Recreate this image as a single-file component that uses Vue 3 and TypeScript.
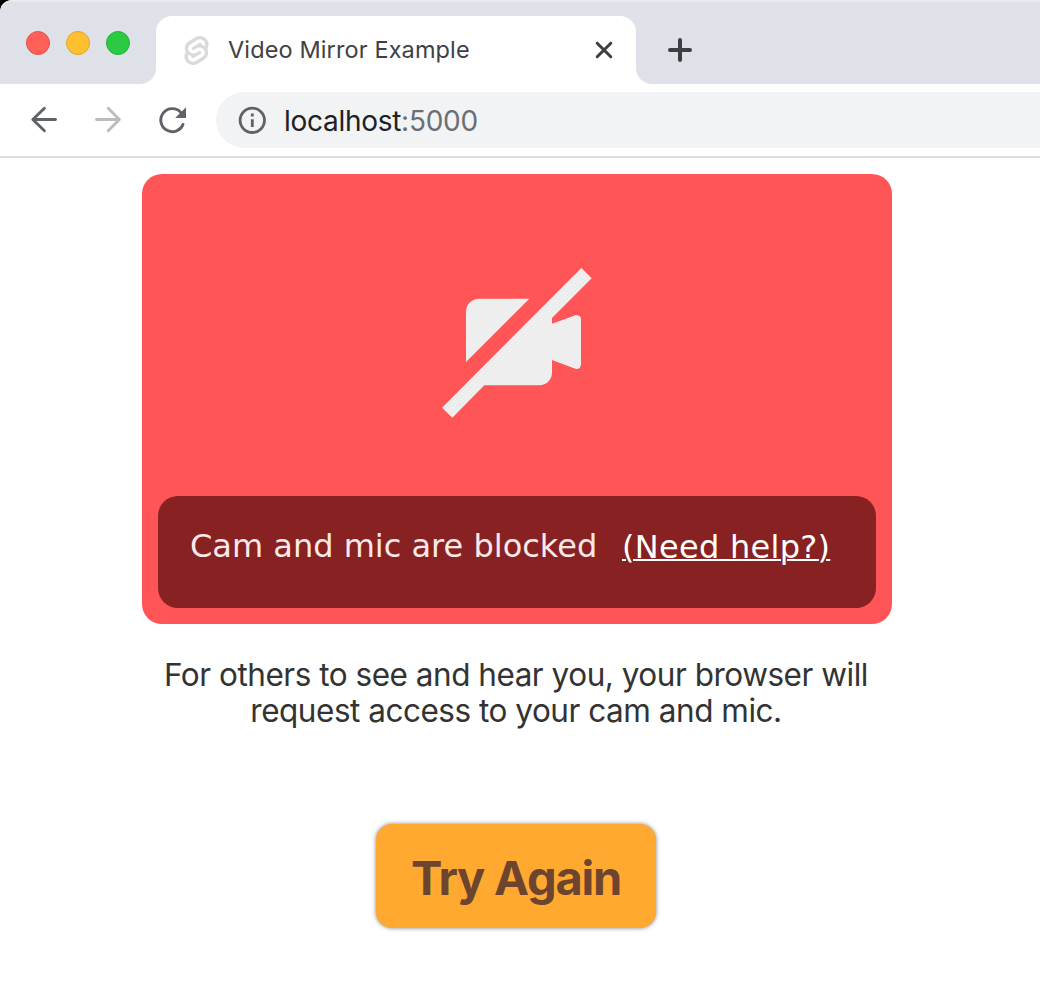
<script setup lang="ts">
const windowControls: string[] = ['close', 'minimize', 'maximize']
const tabTitle = 'Video Mirror Example'
const address = { host: 'localhost', port: ':5000' }
</script>

<template>
  <div class="window">
    <header class="tab-strip">
      <div class="controls">
        <span v-for="name in windowControls" :key="name" class="control" :class="name"></span>
      </div>
      <div class="tab">
        <svg class="favicon" viewBox="0 0 24 24" aria-hidden="true">
          <path d="M10.354 21.125a4.44 4.44 0 0 1-4.765-1.767 4.109 4.109 0 0 1-.703-3.107 3.898 3.898 0 0 1 .134-.522l.105-.321.287.21a7.21 7.21 0 0 0 2.186 1.092l.208.063-.02.208a1.253 1.253 0 0 0 .226.83 1.337 1.337 0 0 0 1.435.533 1.231 1.231 0 0 0 .343-.15l5.59-3.562a1.164 1.164 0 0 0 .524-.778 1.242 1.242 0 0 0-.211-.937 1.338 1.338 0 0 0-1.435-.533 1.23 1.23 0 0 0-.343.15l-2.133 1.36a4.078 4.078 0 0 1-1.135.499 4.44 4.44 0 0 1-4.765-1.766 4.108 4.108 0 0 1-.702-3.108 3.855 3.855 0 0 1 1.742-2.582l5.589-3.563a4.072 4.072 0 0 1 1.135-.499 4.44 4.44 0 0 1 4.765 1.767 4.109 4.109 0 0 1 .703 3.107 3.943 3.943 0 0 1-.134.522l-.105.321-.286-.21a7.204 7.204 0 0 0-2.187-1.093l-.208-.063.02-.207a1.255 1.255 0 0 0-.226-.831 1.337 1.337 0 0 0-1.435-.532 1.231 1.231 0 0 0-.343.15L8.62 9.368a1.162 1.162 0 0 0-.524.778 1.24 1.24 0 0 0 .211.937 1.338 1.338 0 0 0 1.435.533 1.235 1.235 0 0 0 .344-.151l2.132-1.36a4.067 4.067 0 0 1 1.135-.498 4.44 4.44 0 0 1 4.765 1.766 4.108 4.108 0 0 1 .702 3.108 3.857 3.857 0 0 1-1.742 2.583l-5.589 3.562a4.072 4.072 0 0 1-1.135.499m10.358-17.95C18.484-.015 14.082-.96 10.9 1.068L5.31 4.63a6.412 6.412 0 0 0-2.896 4.295 6.753 6.753 0 0 0 .666 4.336 6.43 6.43 0 0 0-.96 2.396 6.833 6.833 0 0 0 1.168 5.167c2.229 3.19 6.63 4.135 9.812 2.108l5.59-3.562a6.41 6.41 0 0 0 2.896-4.295 6.756 6.756 0 0 0-.665-4.336 6.429 6.429 0 0 0 .958-2.396 6.831 6.831 0 0 0-1.167-5.168Z" />
        </svg>
        <span class="tab-title">{{ tabTitle }}</span>
        <svg class="tab-close" viewBox="0 0 20 20" aria-hidden="true">
          <path d="M3.2 3.2 16.8 16.8M16.8 3.2 3.2 16.8" />
        </svg>
      </div>
      <svg class="new-tab" viewBox="0 0 24 24" aria-hidden="true">
        <path d="M12 2V22M2 12H22" />
      </svg>
    </header>

    <nav class="toolbar">
      <svg class="nav-icon" viewBox="0 0 32 32" aria-hidden="true">
        <path d="M27.5 15.5H5M16.4 4.3 4.8 15.5 16.4 26.7" />
      </svg>
      <svg class="nav-icon disabled" viewBox="0 0 32 32" aria-hidden="true">
        <path d="M4.5 15.5H27M16.2 4.3 27.4 15.5 16.2 26.7" />
      </svg>
      <svg class="nav-icon" viewBox="0 0 32 32" aria-hidden="true">
        <path d="M27 20.4A11.5 11.5 0 1 1 24.8 8.4" />
        <path class="solid" d="M30 3.2V14H19.2Z" />
      </svg>
      <div class="omnibox">
        <svg class="info" viewBox="0 0 28 28" aria-hidden="true">
          <circle cx="14.3" cy="14.3" r="12.2" />
          <path d="M14.3 13.2V21M14.3 7.6V10.5" />
        </svg>
        <span class="url">{{ address.host }}<span class="port">{{ address.port }}</span></span>
      </div>
    </nav>

    <main class="page">
      <section class="video-frame">
        <svg class="camera-off" viewBox="0 0 540 525" aria-hidden="true">
          <path d="M108 321V170A39 39 0 0 1 147 131H298Z" />
          <path d="M454 39 485 70 366 189V206L436 181Q452 178 453 193V328Q452 345 436 341L366 315V352A38 38 0 0 1 328 391H163L67 488 36 458Z" />
        </svg>
        <div class="notice">
          <span class="notice-text">Cam and mic are blocked</span>
          <a class="help">(Need help?)</a>
        </div>
      </section>
      <p class="hint">
        <span class="line">For others to see and hear you, your browser will</span>
        <span class="line">request access to your cam and mic.</span>
      </p>
      <button class="retry" type="button">Try Again</button>
    </main>
  </div>
</template>

<style>
body {
  margin: 0;
  background: #fff;
}
</style>

<style scoped>
.window {
  width: 1040px;
  height: 992px;
  overflow: hidden;
  background: linear-gradient(#000 0 30px, #fff 30px);
  font-family: Inter, "Liberation Sans", sans-serif;
}
.tab-strip {
  box-sizing: border-box;
  display: flex;
  height: 84px;
  padding-left: 26px;
  border-top-left-radius: 12px;
  background: #dee1e7;
  box-shadow: inset 0 2px 1px #e9ecef;
}
.controls {
  display: flex;
  gap: 16px;
  width: 130px;
  padding-top: 31px;
}
.control {
  box-sizing: border-box;
  width: 24px;
  height: 24px;
  border: 1px solid #e2514b;
  border-radius: 50%;
  background: #ff6158;
}
.minimize {
  border-color: #e0a32c;
  background: #ffc02f;
}
.maximize {
  border-color: #21b237;
  background: #2acb42;
}
.tab {
  position: relative;
  box-sizing: border-box;
  display: flex;
  align-items: center;
  width: 480px;
  height: 68px;
  margin-top: 16px;
  padding: 0 22px 0 26px;
  border-radius: 16px 16px 0 0;
  background: #fff;
}
.tab::before,
.tab::after {
  position: absolute;
  bottom: 0;
  width: 16px;
  height: 16px;
  content: "";
}
.tab::before {
  right: 100%;
  background: radial-gradient(circle at 0 0, transparent 15.5px, #fff 16.5px);
}
.tab::after {
  left: 100%;
  background: radial-gradient(circle at 100% 0, transparent 15.5px, #fff 16.5px);
}
.favicon {
  width: 29px;
  height: 29px;
  fill: #dadada;
}
.tab-title {
  flex: 1;
  margin-left: 17px;
  color: #3f4145;
  font-size: 23.5px;
  line-height: 30px;
  letter-spacing: 0.12px;
  white-space: nowrap;
}
.tab-close {
  width: 20px;
  height: 20px;
  fill: none;
  stroke: #3c4043;
  stroke-width: 3;
  stroke-linecap: round;
}
.new-tab {
  width: 24px;
  height: 24px;
  margin: 38px 0 0 32px;
  fill: none;
  stroke: #3c4043;
  stroke-width: 4;
  stroke-linecap: round;
}
.toolbar {
  box-sizing: border-box;
  display: flex;
  align-items: center;
  gap: 32px;
  height: 74px;
  padding-left: 28px;
  border-bottom: 2px solid #dadce0;
  background: #fff;
}
.nav-icon {
  flex: none;
  width: 32px;
  height: 32px;
  fill: none;
  stroke: #5f6368;
  stroke-width: 2.9;
  stroke-linecap: round;
  stroke-linejoin: round;
}
.disabled {
  stroke: #babcbe;
}
.nav-icon .solid {
  fill: #5f6368;
  stroke: none;
}
.omnibox {
  box-sizing: border-box;
  display: flex;
  flex: 1;
  align-items: center;
  gap: 18px;
  height: 56px;
  margin-left: -4px;
  padding-left: 22px;
  border-radius: 28px 0 0 28px;
  background: #f1f3f4;
}
.info {
  width: 28px;
  height: 28px;
  fill: none;
  stroke: #5f6368;
  stroke-width: 2.8;
}
.url {
  padding-top: 1px;
  color: #202124;
  font-size: 28px;
  line-height: 36px;
  letter-spacing: -0.28px;
  white-space: nowrap;
}
.port {
  color: #6b6f73;
}
.page {
  display: flex;
  flex-direction: column;
  align-items: center;
  width: 750px;
  margin: 16px 0 0 142px;
}
.video-frame {
  box-sizing: border-box;
  display: flex;
  flex-direction: column;
  align-items: center;
  justify-content: space-between;
  width: 750px;
  height: 450px;
  padding: 81px 16px 16px;
  border-radius: 20px;
  background: #ff5557;
}
.camera-off {
  width: 180px;
  height: 175px;
  margin-right: -6px;
  fill: #eee;
}
.notice {
  box-sizing: border-box;
  display: flex;
  width: 718px;
  height: 112px;
  padding: 30px 32px;
  border-radius: 20px;
  background: #872122;
  color: #fbe9e9;
  font-family: "DejaVu Sans", sans-serif;
  font-size: 32px;
  line-height: 40px;
  white-space: nowrap;
}
.notice-text {
  width: 432px;
}
.help {
  padding-top: 1px;
  color: #fff;
  letter-spacing: 0.28px;
  text-decoration: underline;
  text-decoration-thickness: 2px;
}
.hint {
  margin: 33px 2px 0 0;
  color: #333;
  font-size: 31.5px;
  line-height: 36px;
  letter-spacing: -0.48px;
  text-align: center;
  white-space: nowrap;
}
.line {
  display: block;
}
.retry {
  width: 280px;
  height: 104px;
  margin: 95px 2px 0 0;
  padding: 2px 0 0;
  border: 0;
  border-radius: 16px;
  background: #ffa931;
  box-shadow: 0 0 4px rgba(0, 0, 0, 0.5);
  color: #6d452f;
  font-family: inherit;
  font-size: 47px;
  font-weight: 700;
  letter-spacing: -1.2px;
  white-space: nowrap;
}
</style>
